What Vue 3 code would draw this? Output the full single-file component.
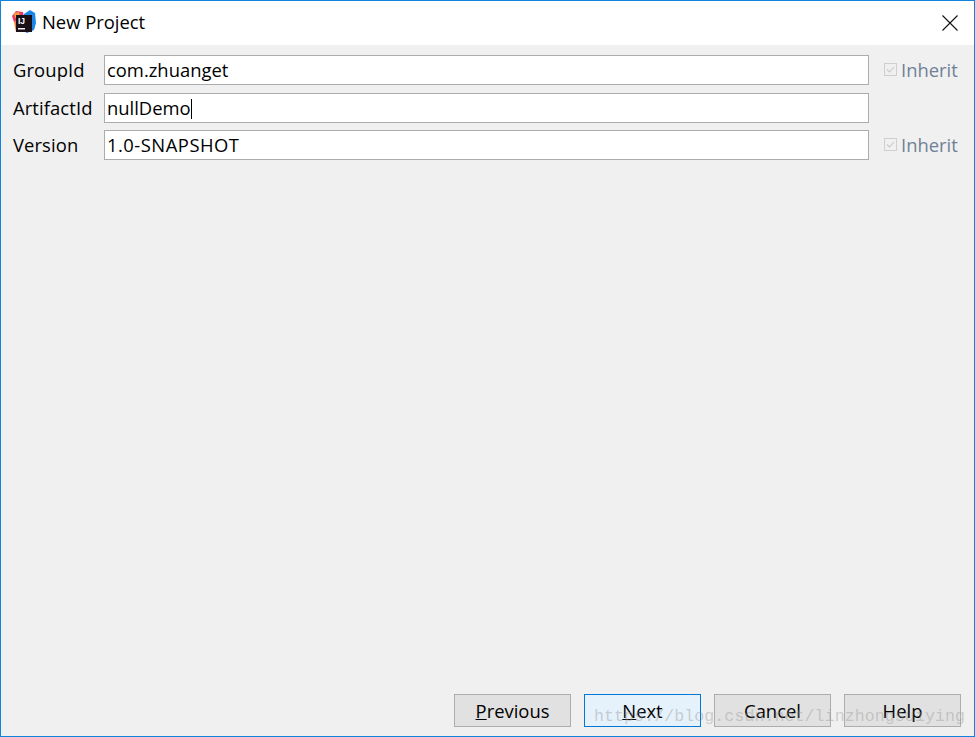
<script setup>
const fields = [
  { label: 'GroupId', value: 'com.zhuanget', inherit: true },
  { label: 'ArtifactId', value: 'nullDemo', inherit: false, caret: true },
  { label: 'Version', value: '1.0-SNAPSHOT', inherit: true, caps: true },
]
const buttons = [
  { pre: '', key: 'P', post: 'revious' },
  { pre: '', key: 'N', post: 'ext', focus: true },
  { pre: 'Cancel', key: '', post: '' },
  { pre: 'Help', key: '', post: '' },
]
</script>

<template>
  <div class="win">
    <header class="title">
      <svg class="logo" width="24" height="24" viewBox="0 0 24 24">
        <path d="M0 6 L4 1 L11 2 L12 8 L6 13 L2 12 Z" fill="#e8386d" />
        <path d="M2 12 L6 9 L9 14 L8 22 L4 22 Z" fill="#f4843c" />
        <path d="M12 4 L18 0 L23 3 L24 13 L22 20 L15 23 L10 20 Z" fill="#1c86e8" />
        <path d="M2 3 L7 2 L8 6 L3 8 Z" fill="#f6a13a" />
        <rect x="4" y="5" width="16" height="17" fill="#1a1018" />
        <text x="6" y="14" class="logo-t">IJ</text>
        <rect x="6" y="18" width="7" height="1.5" fill="#eee" />
      </svg>
      <span class="title-text">New Project</span>
      <svg class="close" width="16" height="16" viewBox="0 0 16 16">
        <path d="M0.5 0.5 L15.5 15.5 M15.5 0.5 L0.5 15.5" stroke="#111" stroke-width="1.1" fill="none" />
      </svg>
    </header>
    <main class="body">
      <div class="form">
        <div v-for="f in fields" :key="f.label" class="row">
          <label class="lab">{{ f.label }}</label>
          <div class="input" :class="{ caps: f.caps }">{{ f.value }}<i v-if="f.caret" class="caret"></i></div>
          <div class="inh">
            <template v-if="f.inherit">
              <svg class="chk" width="13" height="13" viewBox="0 0 13 13">
                <rect x="0.5" y="0.5" width="12" height="12" fill="#f0f0f0" stroke="#cfcfcf" />
                <path d="M3 6.5 L5.5 9 L10 4" stroke="#c8c8c8" stroke-width="1.1" fill="none" />
              </svg>
              <span>Inherit</span>
            </template>
          </div>
        </div>
      </div>
      <footer class="foot">
        <button v-for="b in buttons" :key="b.pre + b.key" class="btn" :class="{ focus: b.focus }">{{ b.pre }}<u>{{ b.key }}</u>{{ b.post }}</button>
      </footer>
      <div class="mark">https://blog.csdn.net/linzhongsuiying</div>
    </main>
  </div>
</template>

<style>
html, body { margin: 0; background: #f0f0f0; }
</style>

<style scoped>
.win {
  width: 975px;
  height: 737px;
  box-sizing: border-box;
  border: 1px solid #0f83de;
  display: flex;
  flex-direction: column;
  font-family: "Open Sans", "Noto Sans", sans-serif;
  font-size: 18.4px;
  color: #000;
  background: #f0f0f0;
  overflow: hidden;
}
.title {
  height: 44px;
  background: #fff;
  display: flex;
  align-items: center;
  padding: 0 16px 0 11px;
  flex: none;
}
.logo { flex: none; margin-bottom: 2px; }
.logo-t { font: 700 8.5px "Liberation Sans", sans-serif; fill: #fff; }
.title-text { margin-left: 6px; flex: 1; font-size: 18.4px; margin-bottom: 3px; }
.close { flex: none; margin-bottom: 1px; }
.body {
  flex: 1;
  position: relative;
  display: flex;
  flex-direction: column;
  justify-content: space-between;
}
.form {
  padding: 10px 0 0 12px;
  display: flex;
  flex-direction: column;
  gap: 8px;
}
.row {
  display: flex;
  align-items: center;
  height: 30px;
}
.row:last-child { margin-top: -1px; }
.lab { width: 91px; flex: none; margin-bottom: 2px; letter-spacing: 0.1px; }
.input {
  width: 765px;
  height: 30px;
  box-sizing: border-box;
  border: 1px solid #acacac;
  background: #fff;
  padding-left: 2px;
  line-height: 28px;
  flex: none;
  white-space: nowrap;
}
.input.caps { letter-spacing: 0.5px; }
.caret {
  display: inline-block;
  width: 1px;
  height: 20px;
  background: #000;
  vertical-align: -4px;
}
.inh {
  margin-left: 15px;
  display: flex;
  align-items: center;
  gap: 4px;
  color: #6f8196;
  margin-bottom: 1px;
}
.foot {
  display: flex;
  justify-content: flex-end;
  gap: 13px;
  padding: 0 13px 9px 0;
}
.btn {
  width: 117px;
  height: 33px;
  box-sizing: border-box;
  border: 1px solid #adadad;
  background: #e1e1e1;
  font: inherit;
  color: #000;
  padding: 1px 0 0;
  line-height: 1;
}
.btn.focus { background: #e5f1fb; border-color: #0078d7; }
.mark {
  position: absolute;
  left: 593px;
  top: 662px;
  font: 16.6px "Liberation Mono", monospace;
  letter-spacing: 0.07px;
  color: rgba(150, 150, 150, 0.42);
  white-space: nowrap;
  pointer-events: none;
}
</style>
